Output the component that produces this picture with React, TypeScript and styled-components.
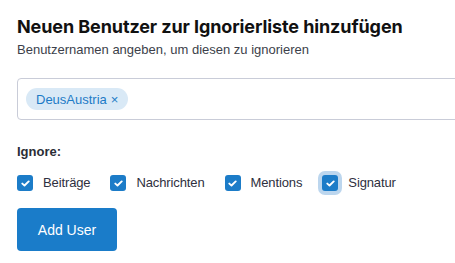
import React from "react";
import styled, { createGlobalStyle } from "styled-components";

const GlobalStyle = createGlobalStyle`
  html, body {
    margin: 0;
    padding: 0;
    background: #ffffff;
    overflow: hidden;
  }
  body {
    font-family: "Liberation Sans", Arial, sans-serif;
  }
`;

const options = ["Beiträge", "Nachrichten", "Mentions", "Signatur"];

function CheckIcon() {
  return (
    <svg width="9" height="7" viewBox="0 0 9 7">
      <path d="M1.3 3.6 L3.5 5.5 L7.7 1.4" fill="none" stroke="#ffffff" strokeWidth="1.9" strokeLinecap="round" strokeLinejoin="round" />
    </svg>
  );
}

function App() {
  return (
    <Page>
      <GlobalStyle />
      <Title>Neuen Benutzer zur Ignorierliste hinzufügen</Title>
      <Subtitle>Benutzernamen angeben, um diesen zu ignorieren</Subtitle>
      <TagInput>
        <Tag>
          DeusAustria <TagRemove>×</TagRemove>
        </Tag>
      </TagInput>
      <SectionLabel>Ignore:</SectionLabel>
      <CheckRow>
        {options.map((label, i) => (
          <CheckItem key={label}>
            <CheckBox $focused={i === options.length - 1}>
              <CheckIcon />
            </CheckBox>
            <CheckLabel>{label}</CheckLabel>
          </CheckItem>
        ))}
      </CheckRow>
      <AddButton>Add User</AddButton>
    </Page>
  );
}

const Page = styled.div`
  padding: 16px 0 0 17px;
  display: flex;
  flex-direction: column;
  align-items: flex-start;
`;

const Title = styled.h2`
  margin: 0;
  font-family: Inter, "Liberation Sans", sans-serif;
  font-weight: 700;
  font-size: 18px;
  line-height: 22px;
  color: #111111;
  letter-spacing: -0.1px;
`;

const Subtitle = styled.div`
  margin-top: 4px;
  font-size: 13px;
  line-height: 16px;
  color: #3c3f4a;
`;

const TagInput = styled.div`
  margin-top: 20px;
  box-sizing: border-box;
  width: 470px;
  height: 42px;
  border: 1px solid #c9ccd8;
  border-radius: 4px;
  padding: 0 8px;
  display: flex;
  align-items: center;
`;

const Tag = styled.span`
  display: inline-flex;
  align-items: center;
  height: 22px;
  padding: 0 10px;
  border-radius: 11px;
  background: #d9e9f6;
  color: #1d7bc6;
  font-size: 13px;
  gap: 4px;
`;

const TagRemove = styled.span`
  font-size: 13px;
`;

const SectionLabel = styled.div`
  margin-top: 24px;
  font-size: 13px;
  font-weight: 700;
  line-height: 16px;
  color: #2b2d36;
`;

const CheckRow = styled.div`
  margin-top: 15px;
  display: flex;
  gap: 20px;
`;

const CheckItem = styled.label`
  display: flex;
  align-items: center;
  gap: 10px;
`;

const CheckBox = styled.span<{ $focused?: boolean }>`
  width: 16px;
  height: 16px;
  border-radius: 3px;
  background: #1c7cc8;
  display: flex;
  align-items: center;
  justify-content: center;
  box-shadow: ${({ $focused }) => ($focused ? "0 0 0 4px #bcd6ee" : "none")};
`;

const CheckLabel = styled.span`
  font-size: 13px;
  line-height: 16px;
  color: #2e3040;
  letter-spacing: -0.12px;
`;

const AddButton = styled.button`
  margin-top: 17px;
  width: 100px;
  height: 43px;
  border: none;
  border-radius: 4px;
  background: #1a7cc9;
  color: #ffffff;
  font-family: "Liberation Sans", Arial, sans-serif;
  font-size: 14px;
  cursor: pointer;
`;

export default App;
